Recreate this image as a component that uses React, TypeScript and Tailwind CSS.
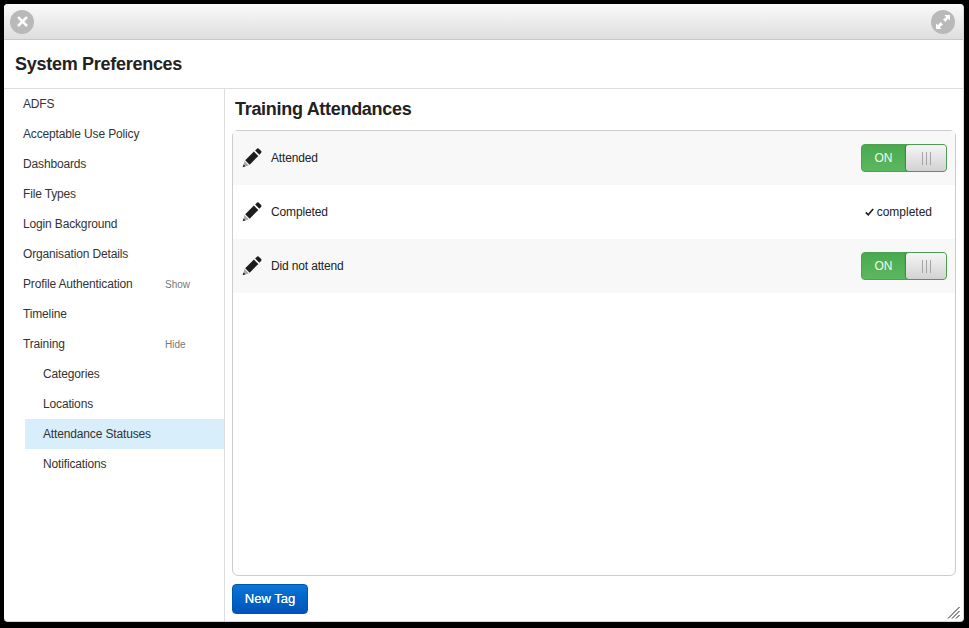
import { X } from 'lucide-react'
import type { ReactNode } from 'react'

const menuItems = [
  { label: 'ADFS' },
  { label: 'Acceptable Use Policy' },
  { label: 'Dashboards' },
  { label: 'File Types' },
  { label: 'Login Background' },
  { label: 'Organisation Details' },
  { label: 'Profile Authentication', action: 'Show' },
  { label: 'Timeline' },
  { label: 'Training', action: 'Hide' },
]

const subItems = [
  { label: 'Categories' },
  { label: 'Locations' },
  { label: 'Attendance Statuses', active: true },
  { label: 'Notifications' },
]

function PencilIcon() {
  return (
    <svg width="20" height="20" viewBox="0 0 20 20" className="shrink-0 text-[#1c1c1c]">
      {/* eraser */}
      <path d="M13.1 2.5 L15.2 0.6 Q16 0.1 16.8 0.7 L19.2 3.1 Q19.8 3.9 19.2 4.7 L17.4 6.8 Z" fill="currentColor" />
      {/* body */}
      <path d="M11.9 3.6 L16.3 8 L7.7 16.7 L3.2 12.2 Z" fill="currentColor" />
      {/* tip */}
      <path d="M2.5 13.1 L6.8 17.4 L1 19 Z" fill="#a8a8a8" />
      <path d="M1.6 16.4 L3.5 18.3 L0.6 19.3 Z" fill="currentColor" />
    </svg>
  )
}

function ExpandIcon() {
  return (
    <svg width="24" height="24" viewBox="0 0 24 24">
      <circle cx="12" cy="12" r="12" fill="#b9b9b9" />
      <path d="M13.5 5 L19 5 L19 10.5 L17 8.8 L14.5 12 L12 9.5 L15.2 7 Z" fill="#fff" />
      <path d="M5 13.5 L5 19 L10.5 19 L8.8 17 L12 14.5 L9.5 12 L7 15.2 Z" fill="#fff" />
    </svg>
  )
}

function Toggle() {
  return (
    <div className="flex h-[28px] w-[86px] rounded-[4px] border border-[#4f9f53] bg-[#4fae54] text-[12px]">
      <div className="flex w-[44px] items-center justify-center rounded-l-[3px] bg-gradient-to-b from-[#4aa94e] to-[#5cb860] pr-[1px] text-[#f2fbf2]">ON</div>
      <div className="flex flex-1 items-center justify-center gap-[3px] rounded-[3px] bg-gradient-to-b from-[#f6f6f6] to-[#d2d2d2] shadow-[-1px_0_1px_rgba(0,60,0,0.35)]">
        <span className="h-[13px] w-px bg-[#a4a4a4]" />
        <span className="h-[13px] w-px bg-[#a4a4a4]" />
        <span className="h-[13px] w-px bg-[#a4a4a4]" />
      </div>
    </div>
  )
}

function TagRow({ label, shaded, children }: { label: string; shaded?: boolean; children: ReactNode }) {
  return (
    <div className={`flex h-[54px] items-center pl-[9px] pr-[8px] ${shaded ? 'bg-[#f8f8f8]' : 'bg-white'}`}>
      <PencilIcon />
      <span className="ml-[9px] text-[12px] tracking-[-0.15px] text-[#222]">{label}</span>
      <div className="ml-auto">{children}</div>
    </div>
  )
}

export default function App() {
  return (
    <div className="h-[628px] w-[969px] overflow-hidden bg-black pb-[6px] pl-[4px] pr-[5px] pt-[4px] font-['Liberation_Sans',Arial,sans-serif]">
      <div className="relative flex h-full flex-col overflow-hidden rounded-[4px] border-b border-r border-[#d8d8d8] bg-white">
        {/* Title bar */}
        <div className="flex h-[36px] shrink-0 items-center justify-between border-b border-[#c8c8c8] bg-gradient-to-b from-[#fafafa] to-[#dedede] pl-[6px] pr-[8px]">
          <div className="flex h-[24px] w-[24px] items-center justify-center rounded-full bg-[#b9b9b9]">
            <X size={15} strokeWidth={4} className="text-white" />
          </div>
          <ExpandIcon />
        </div>

        {/* Heading */}
        <div className="flex h-[49px] shrink-0 items-center border-b border-[#ddd] pl-[11px]">
          <h1 className="text-[18px] font-bold tracking-[-0.28px] text-[#222]">System Preferences</h1>
        </div>

        <div className="flex min-h-0 flex-1">
          {/* Sidebar */}
          <nav className="w-[221px] shrink-0 border-r border-[#ddd] text-[12px] tracking-[-0.15px] text-[#333]">
            {menuItems.map(({ label, action }) => (
              <div key={label} className="relative flex h-[30px] items-center pl-[19px]">
                <span>{label}</span>
                {action && <span className="absolute left-[161px] text-[10px] tracking-normal text-[#777]">{action}</span>}
              </div>
            ))}
            {subItems.map(({ label, active }) => (
              <div key={label} className={`ml-[21px] flex h-[30px] items-center pl-[18px] ${active ? 'bg-[#d9eefb]' : ''}`}>
                {label}
              </div>
            ))}
          </nav>

          {/* Content */}
          <main className="flex min-w-0 flex-1 flex-col pl-[7px] pr-[7px]">
            <h2 className="flex h-[41px] shrink-0 items-center pl-[3px] text-[18px] font-bold tracking-[-0.3px] text-[#222]">Training Attendances</h2>
            <div className="min-h-0 flex-1 rounded-[6px] border border-[#ccc] bg-white">
              <TagRow label="Attended" shaded>
                <Toggle />
              </TagRow>
              <TagRow label="Completed">
                <div className="flex items-center gap-[3px] pr-[15px] text-[12px] text-[#222]">
                  <svg width="9" height="8" viewBox="0 0 9 8">
                    <path d="M0.8 4.4 L3.2 6.8 L8.2 1" fill="none" stroke="#222" strokeWidth="1.7" />
                  </svg>
                  completed
                </div>
              </TagRow>
              <TagRow label="Did not attend" shaded>
                <Toggle />
              </TagRow>
            </div>
            <div className="flex h-[45px] shrink-0 items-center">
              <button className="h-[30px] w-[76px] rounded-[4px] border border-[#0056b3] bg-gradient-to-b from-[#0a76d8] to-[#0053b8] text-[13px] text-white [text-shadow:0_0_0.5px_#fff]">
                New Tag
              </button>
            </div>
          </main>
        </div>

        {/* Resize grip */}
        <svg width="13" height="13" viewBox="0 0 13 13" className="absolute bottom-[2px] right-[3px]">
          <path d="M1 12.5 L12.5 1 M5 12.5 L12.5 5 M9 12.5 L12.5 9" stroke="#222" strokeWidth="1" />
        </svg>
      </div>
    </div>
  )
}
